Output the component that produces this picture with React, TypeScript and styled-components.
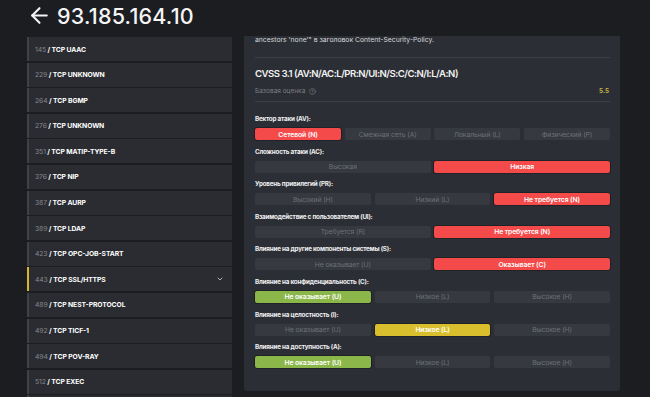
import React from 'react';
import styled, { createGlobalStyle } from 'styled-components';
import { ArrowLeft, ChevronDown, CircleHelp } from 'lucide-react';

const GlobalStyle = createGlobalStyle`
  html, body {
    margin: 0;
    padding: 0;
    background: #1c1d21;
    font-family: Inter, "Noto Sans", "Liberation Sans", sans-serif;
    color: #ffffff;
  }
  * { box-sizing: border-box; }
`;

const Page = styled.div`
  width: 650px;
  height: 397px;
  overflow: hidden;
  padding: 0 30px 0 27px;
  display: flex;
  flex-direction: column;
`;

const Header = styled.div`
  height: 36px;
  flex-shrink: 0;
  display: flex;
  align-items: center;
  gap: 5px;
  padding: 0 0 5px 0;
`;

const Title = styled.h1`
  margin: 0;
  font-size: 21.5px;
  font-weight: 500;
  letter-spacing: 0.2px;
  color: #f4f4f5;
`;

const Body = styled.div`
  display: flex;
  align-items: flex-start;
  gap: 12px;
  padding-top: 1px;
`;

const PortList = styled.div`
  width: 205px;
  flex-shrink: 0;
  display: flex;
  flex-direction: column;
  gap: 1.6px;
`;

const PortItem = styled.div<{ $active?: boolean }>`
  height: 24px;
  flex-shrink: 0;
  background: #2a2c31;
  border-left: 2px solid ${p => (p.$active ? '#d8b52a' : '#3e4148')};
  display: flex;
  align-items: center;
  justify-content: space-between;
  padding: 0 8px 0 6px;
  font-size: 6.8px;
  letter-spacing: -0.1px;
`;

const PortNum = styled.span`
  color: #85888f;
`;

const PortName = styled.span`
  color: #ffffff;
  font-weight: 700;
`;

const Panel = styled.div`
  width: 376px;
  margin-top: -1px;
  background: #2b2e34;
  border-radius: 0 0 3px 3px;
  padding: 0 10px 23px 11px;
`;

const Intro = styled.div`
  font-size: 6.8px;
  color: #d6d7da;
  margin-top: -1px;
  padding-bottom: 13px;
  border-bottom: 1px solid #3b3e45;
`;

const CvssTitle = styled.div`
  font-size: 9.6px;
  font-weight: 600;
  letter-spacing: -0.5px;
  margin-top: 9px;
  line-height: 14px;
  color: #f2f2f3;
`;

const ScoreRow = styled.div`
  display: flex;
  justify-content: space-between;
  align-items: center;
  margin-top: 6px;
  padding-bottom: 6px;
  border-bottom: 1px solid #3b3e45;
  font-size: 6.5px;
`;

const ScoreLabel = styled.span`
  color: #7b7e86;
  display: flex;
  align-items: center;
  gap: 4px;
`;

const ScoreValue = styled.span`
  color: #c9b646;
  font-weight: 600;
  padding-right: 1px;
`;

const Metrics = styled.div`
  display: flex;
  flex-direction: column;
  gap: 6.6px;
  padding-top: 12px;
`;

const Metric = styled.div`
  display: flex;
  flex-direction: column;
  gap: 4px;
`;

const MetricLabel = styled.div`
  font-size: 6.3px;
  line-height: 10px;
  font-weight: 700;
  letter-spacing: -0.2px;
  color: #f0f0f1;
`;

const Options = styled.div<{ $cols: number }>`
  display: grid;
  grid-template-columns: repeat(${p => p.$cols}, 1fr);
  gap: 3.6px;
`;

const tones: Record<string, string> = {
  red: '#f44a4a',
  green: '#8bb64a',
  yellow: '#d9bf2e',
};

const Option = styled.div<{ $tone?: string }>`
  height: 12px;
  border-radius: 2px;
  display: flex;
  align-items: center;
  justify-content: center;
  font-size: 6.8px;
  letter-spacing: -0.1px;
  background: ${p => (p.$tone ? tones[p.$tone] : '#363940')};
  color: ${p => (p.$tone ? '#ffffff' : '#6d7079')};
  font-weight: ${p => (p.$tone ? 600 : 400)};
  box-shadow: ${p => (p.$tone ? '0 0 0 0.6px #15161a' : 'none')};
`;

const ports = [
  ['145', 'TCP UAAC'],
  ['229', 'TCP UNKNOWN'],
  ['264', 'TCP BGMP'],
  ['276', 'TCP UNKNOWN'],
  ['351', 'TCP MATIP-TYPE-B'],
  ['376', 'TCP NIP'],
  ['387', 'TCP AURP'],
  ['389', 'TCP LDAP'],
  ['423', 'TCP OPC-JOB-START'],
  ['443', 'TCP SSL/HTTPS'],
  ['489', 'TCP NEST-PROTOCOL'],
  ['492', 'TCP TICF-1'],
  ['494', 'TCP POV-RAY'],
  ['512', 'TCP EXEC'],
];

type Opt = { label: string; tone?: string };

const metrics: { label: string; options: Opt[] }[] = [
  {
    label: 'Вектор атаки (AV):',
    options: [
      { label: 'Сетевой (N)', tone: 'red' },
      { label: 'Смежная сеть (A)' },
      { label: 'Локальный (L)' },
      { label: 'Физический (P)' },
    ],
  },
  {
    label: 'Сложность атаки (AC):',
    options: [{ label: 'Высокая' }, { label: 'Низкая', tone: 'red' }],
  },
  {
    label: 'Уровень привилегий (PR):',
    options: [
      { label: 'Высокий (H)' },
      { label: 'Низкий (L)' },
      { label: 'Не требуется (N)', tone: 'red' },
    ],
  },
  {
    label: 'Взаимодействие с пользователем (UI):',
    options: [{ label: 'Требуется (R)' }, { label: 'Не требуется (N)', tone: 'red' }],
  },
  {
    label: 'Влияние на другие компоненты системы (S):',
    options: [{ label: 'Не оказывает (U)' }, { label: 'Оказывает (C)', tone: 'red' }],
  },
  {
    label: 'Влияние на конфиденциальность (C):',
    options: [
      { label: 'Не оказывает (U)', tone: 'green' },
      { label: 'Низкое (L)' },
      { label: 'Высокое (H)' },
    ],
  },
  {
    label: 'Влияние на целостность (I):',
    options: [
      { label: 'Не оказывает (U)' },
      { label: 'Низкое (L)', tone: 'yellow' },
      { label: 'Высокое (H)' },
    ],
  },
  {
    label: 'Влияние на доступность (A):',
    options: [
      { label: 'Не оказывает (U)', tone: 'green' },
      { label: 'Низкое (L)' },
      { label: 'Высокое (H)' },
    ],
  },
];

export default function App() {
  return (
    <>
      <GlobalStyle />
      <Page>
        <Header>
          <ArrowLeft size={25} strokeWidth={2} color="#f4f4f5" />
          <Title>93.185.164.10</Title>
        </Header>
        <Body>
          <PortList>
            {ports.map(([num, name]) => (
              <PortItem key={num} $active={num === '443'}>
                <span>
                  <PortNum>{num}</PortNum>
                  <PortName> / {name}</PortName>
                </span>
                {num === '443' && <ChevronDown size={8} strokeWidth={2.5} color="#c9cacd" />}
              </PortItem>
            ))}
            <PortItem />
          </PortList>
          <Panel>
            <Intro>ancestors 'none'" в заголовок Content-Security-Policy.</Intro>
            <CvssTitle>CVSS 3.1 (AV:N/AC:L/PR:N/UI:N/S:C/C:N/I:L/A:N)</CvssTitle>
            <ScoreRow>
              <ScoreLabel>
                Базовая оценка <CircleHelp size={7} strokeWidth={2} />
              </ScoreLabel>
              <ScoreValue>5.5</ScoreValue>
            </ScoreRow>
            <Metrics>
              {metrics.map(m => (
                <Metric key={m.label}>
                  <MetricLabel>{m.label}</MetricLabel>
                  <Options $cols={m.options.length}>
                    {m.options.map(o => (
                      <Option key={o.label} $tone={o.tone}>
                        {o.label}
                      </Option>
                    ))}
                  </Options>
                </Metric>
              ))}
            </Metrics>
          </Panel>
        </Body>
      </Page>
    </>
  );
}
